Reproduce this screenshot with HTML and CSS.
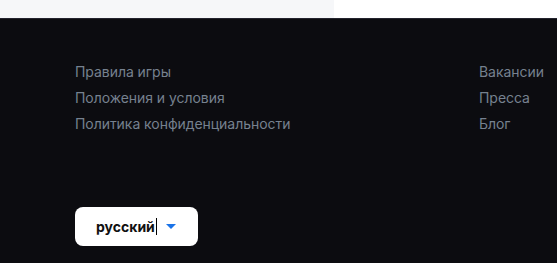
FILE: index.html
```html
<!DOCTYPE html>
<html lang="ru">
<head>
<meta charset="utf-8">
<link rel="stylesheet" href="styles.css">
</head>
<body>
<div class="top">
  <div class="top-gray"></div>
  <div class="top-white"></div>
</div>
<footer class="footer">
  <div class="cols">
    <ul class="col col-left">
      <li><a href="#">Правила игры</a></li>
      <li><a href="#">Положения и условия</a></li>
      <li><a href="#">Политика конфиденциальности</a></li>
    </ul>
    <ul class="col col-right">
      <li><a href="#">Вакансии</a></li>
      <li><a href="#">Пресса</a></li>
      <li><a href="#">Блог</a></li>
    </ul>
  </div>
  <button class="lang"><span class="lang-text">русский</span><span class="caret"></span><span class="arrow"></span></button>
</footer>
</body>
</html>
```
FILE: styles.css
```css
html, body {
  margin: 0;
  padding: 0;
}
body {
  width: 557px;
  height: 263px;
  overflow: hidden;
  background: #0c0c10;
  font-family: Inter, "Noto Sans", sans-serif;
}
.top {
  display: flex;
  height: 18px;
}
.top-gray {
  width: 334px;
  background: #f6f7f9;
}
.top-white {
  flex: 1;
  background: #ffffff;
}
.footer {
  box-sizing: border-box;
  height: 245px;
  background: #0c0c10;
  border-top: 1px solid #24242e;
  padding: 40px 0 0 75px;
}
.cols {
  display: flex;
}
.col {
  list-style: none;
  margin: 0;
  padding: 0;
}
.col-left {
  width: 404px;
}
.col li {
  line-height: 26px;
  font-size: 14px;
  letter-spacing: -0.05px;
}
.col a {
  color: #76818f;
  text-decoration: none;
}
.lang {
  margin-top: 70px;
  display: flex;
  align-items: center;
  width: 123px;
  height: 39px;
  padding: 0 0 0 21px;
  border: none;
  border-radius: 8px;
  background: #ffffff;
  font-family: Inter, "Noto Sans", sans-serif;
  font-size: 14px;
  font-weight: 700;
  color: #111;
}
.caret {
  display: inline-block;
  width: 1px;
  height: 17px;
  background: #000;
  margin-left: 1px;
}
.arrow {
  display: inline-block;
  width: 0;
  height: 0;
  border-left: 5px solid transparent;
  border-right: 5px solid transparent;
  border-top: 5px solid #1a73e8;
  margin-left: 9px;
}
```
